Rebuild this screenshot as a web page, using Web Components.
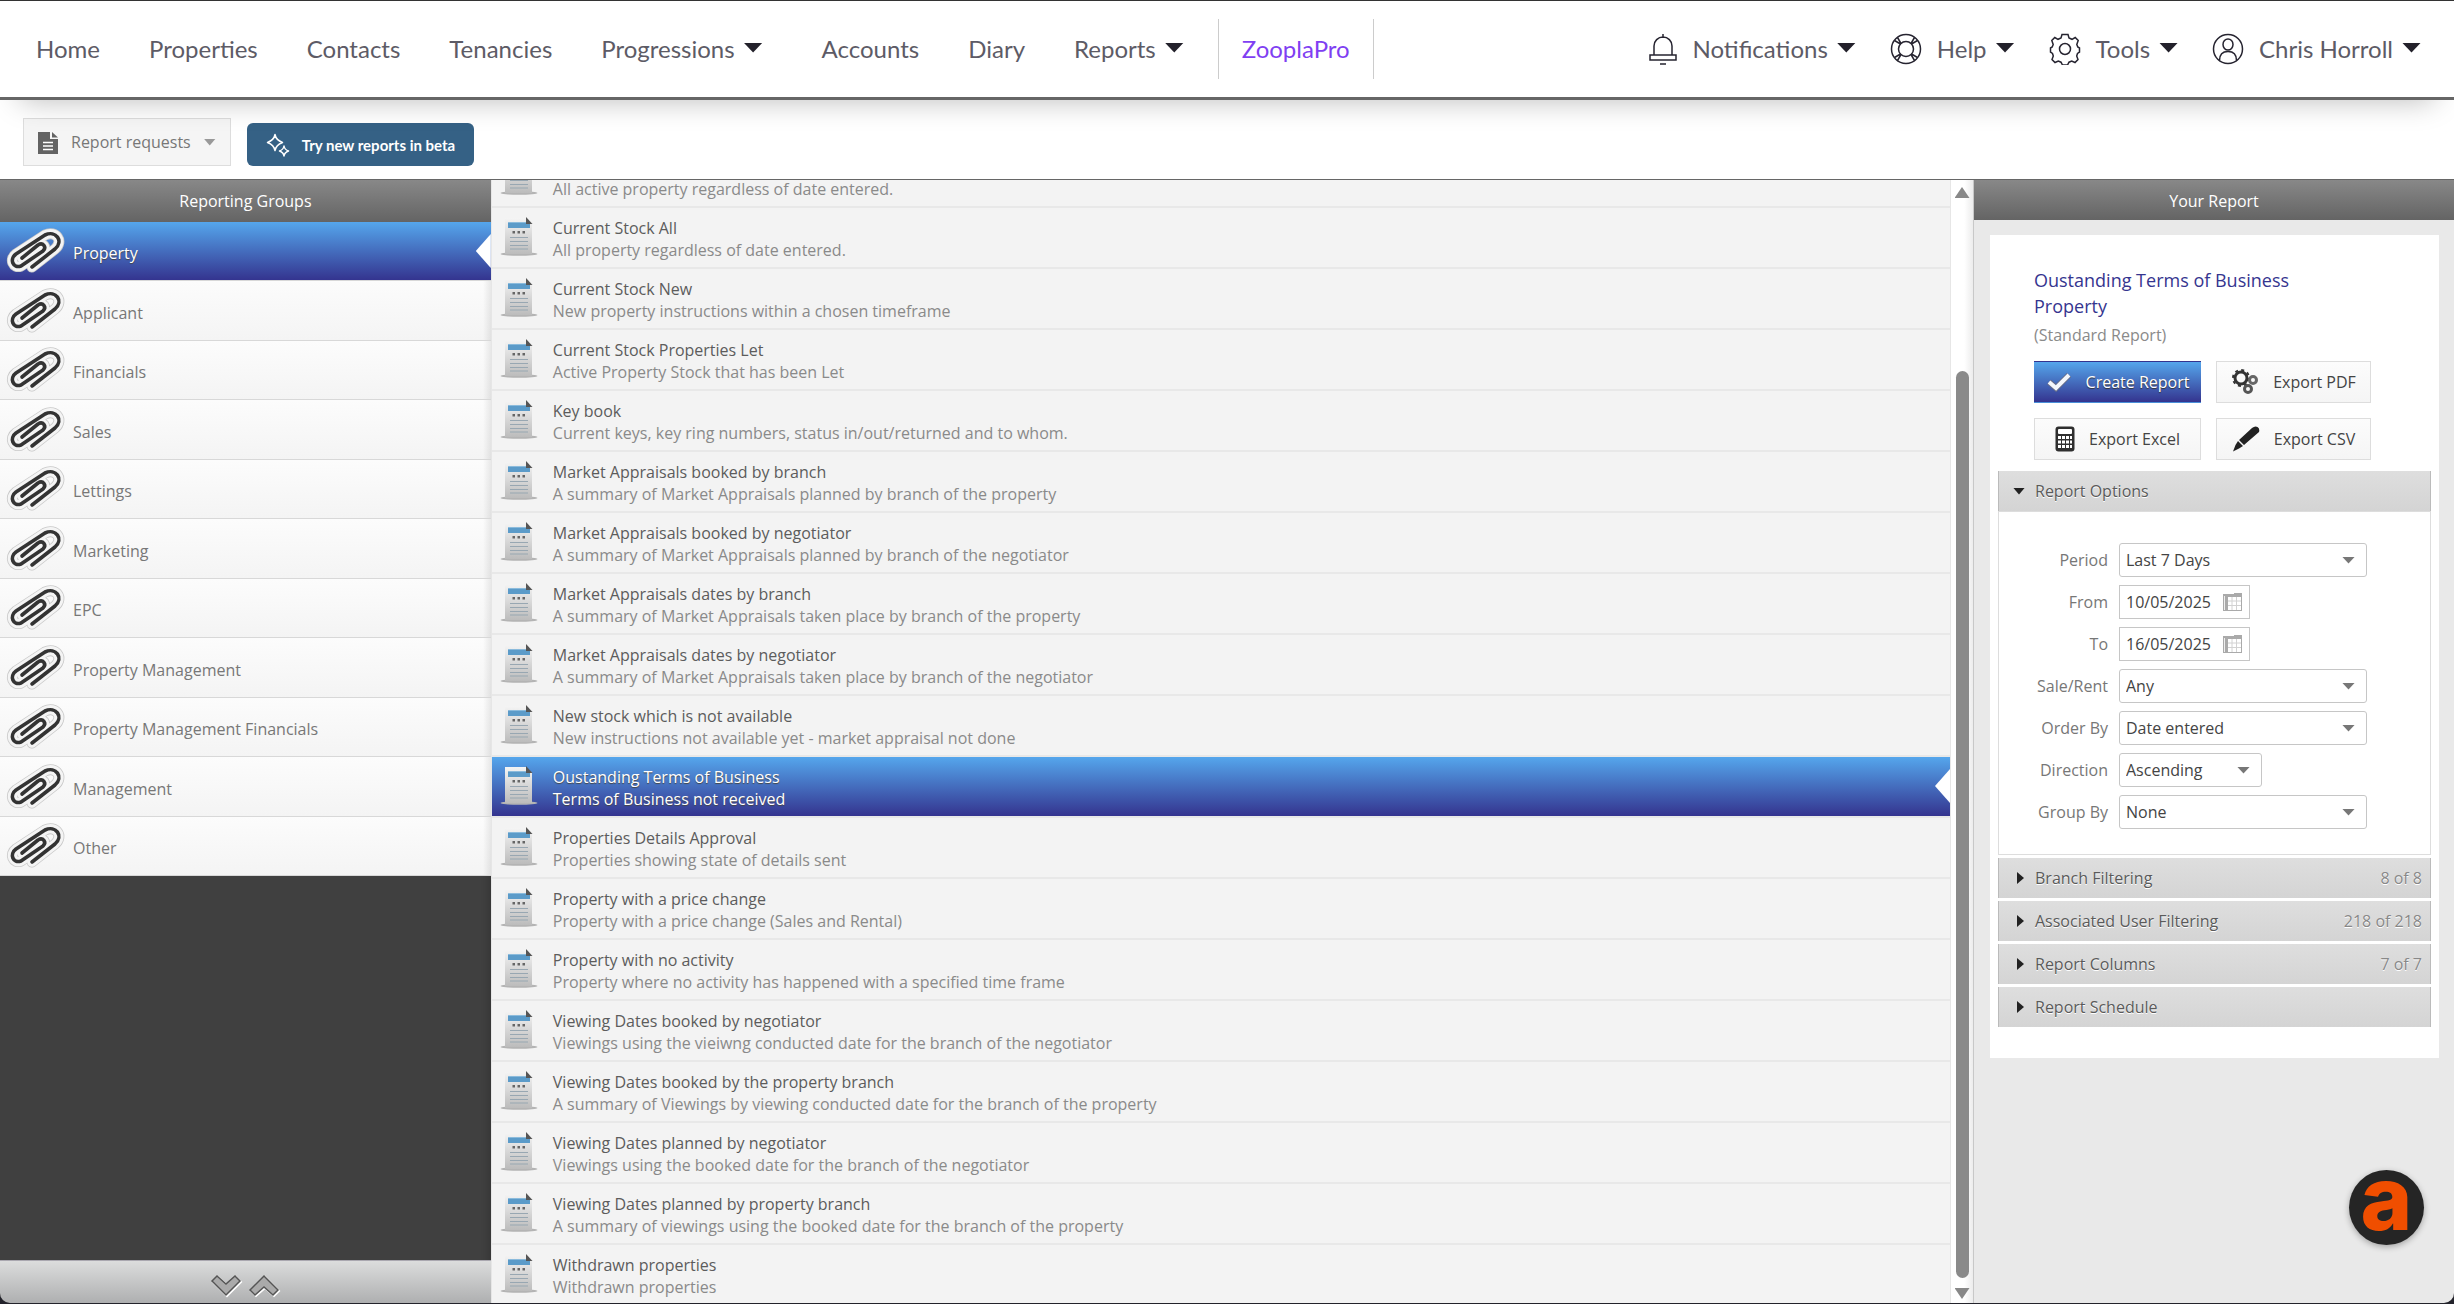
<!DOCTYPE html>
<html lang="en">
<head>
<meta charset="utf-8">
<title>Reports</title>
<style>
    html, body {
        margin: 0;
        height: 100%;
    }

    body {
        background: #23232b;
        overflow: hidden;
        font: 16px/22px "Open Sans", "Noto Sans", sans-serif;
        color: #777;
    }
</style>
</head>
<body>
<report-app></report-app>

<script>
    const define = (name, html, setup) => {
        customElements.define(name, class extends HTMLElement {
            constructor() {
                super();
                this.attachShadow({mode: 'open'});
            }

            connectedCallback() {
                this.shadowRoot.innerHTML = typeof html === 'function' ? html(this) : html;
                if (setup) setup(this, this.shadowRoot);
            }
        });
    };

    const icons = {
        bell: `<svg width="30" height="32" viewBox="0 0 30 32"><path d="M15 1v4M6 22V13a9 9 0 0 1 18 0v9M2 22h26v5H2zM12 31h6"/></svg>`,
        help: `<svg width="32" height="32" viewBox="0 0 32 32"><circle cx="16" cy="16" r="14.5"/><circle cx="16" cy="16" r="7.5"/><path d="M4.500 7.500l6 3.500M7.500 4.500l3.500 6M27.500 7.500l-6 3.500M24.500 4.500l-3.500 6M4.500 24.500l6-3.500M7.500 27.500l3.500-6M27.500 24.500l-6-3.500M24.500 27.500l-3.500-6"/></svg>`,
        gear: `<svg width="32" height="32" viewBox="0 0 32 32"><circle cx="16" cy="16" r="5.500"/><path d="M13 1.500h6l1 3.500 3 1.300 3.200-1.800 3 3-1.400 4 1 2.500 1.700 1v4l-2 1.500-.8 2.500 1.300 3.500-3 3-3.300-1.500-2.700 1.200-1.500 2.800h-5l-1.500-2.800-2.700-1.200L6 29.500l-3-3 1.300-3.500-.8-2.500-2-1.500v-4l1.700-1 1-2.500-1.400-4 3-3L9 6.300 12 5z"/></svg>`,
        user: `<svg width="32" height="32" viewBox="0 0 32 32"><circle cx="16" cy="16" r="14.500"/><ellipse cx="16" cy="11.500" rx="5" ry="5.500"/><path d="M7.500 27.500c0-5.500 3-9 8.500-9s8.500 3.500 8.500 9"/></svg>`,
        // Report row: a page with a folded corner, standing on its shadow
        page: `<svg width="38" height="40" viewBox="0 0 38 40">
            <defs><linearGradient id="p" x2="0" y2="1"><stop stop-color="#f4f4f4"/><stop offset="1" stop-color="#bcbcbc"/></linearGradient></defs>
            <ellipse cx="19" cy="37" rx="18.500" ry="1.800" fill="#b4b4b4"/>
            <path d="M5 1h21l6 6v30H5z" fill="url(#p)"/>
            <path d="M26 0l6.500 7H26z" fill="#555"/>
            <path d="M8 5h18v2h4v4H8z" fill="#5b9bc9"/><path d="M8 5h18v1H8z" fill="#8bbbdc"/>
            <path d="M12.500 14h2.500v2.500h-2.500zM17.500 14h2.500v2.500h-2.500zM22.500 14h2.500v2.500h-2.500z" fill="#666"/>
            <path d="M10 20.500h18M10 24.500h18M10 28.500h18M10 32h18" stroke="#98a7b2" stroke-width="1.200"/></svg>`,
        clip: `<svg width="58" height="44" viewBox="0 0 58 44" fill="none" stroke-linecap="round" stroke-linejoin="round">
            ${[['#c8c8c8', 11], ['#f4f4f4', 9.4], ['#333', 3.6]].map(([c, w]) =>
                `<path stroke="${c}" stroke-width="${w}" d="M25 38 48 20C57 12 49 1 38 6L9 25C2 30 6 40 14 37L36 22C40 18 36 13 31 16L15 29"/>`).join('')}</svg>`,
        check: `<svg width="26" height="20" viewBox="0 0 26 20"><path d="M3 10l7 6L23 3" fill="none" stroke="#666c88" stroke-width="6"/><path d="M3 10l7 6L23 3" fill="none" stroke="#f3f6fc" stroke-width="4"/></svg>`,
        cogs: `<svg width="28" height="26" viewBox="0 0 28 26" fill="none" stroke="#333"><circle cx="10" cy="9" r="6" stroke-width="3"/><circle cx="10" cy="9" r="8" stroke-width="2" stroke-dasharray="3 3.280"/><circle cx="22" cy="11" r="3.500" stroke="#666" stroke-width="3"/><circle cx="17" cy="20" r="3.500" stroke="#555" stroke-width="3"/></svg>`,
        calc: `<svg width="20" height="26" viewBox="0 0 20 26"><rect x="0.500" y="0.500" width="19" height="25" rx="3" fill="#2f2f2f"/><rect x="3" y="3" width="14" height="5" rx="1" fill="#fff"/><path d="M3 10h3v3H3zM7 10h3v3H7zM11 10h3v3h-3zM15 10h2v3h-2zM3 14.500h3v3H3zM7 14.500h3v3H7zM11 14.500h3v3h-3zM15 14.500h2v3h-2zM3 19h3v3H3zM7 19h3v3H7zM11 19h3v3h-3zM15 19h2v3h-2z" fill="#fff"/></svg>`,
        pen: `<svg width="28" height="26" viewBox="0 0 28 26" fill="#222"><path d="M20 2q3-2.500 5.500-1T27 6L12 19l-5-5zM6 15l5 5-4 2.500-6 3L3.500 19z"/></svg>`,
        file: `<svg width="20" height="23" viewBox="0 0 20 23"><path d="M0 1h12v7h8v15H0z" fill="#636363"/><path d="M14 1l6 5.500h-6z" fill="#636363"/><path d="M5 11.500h10M5 15h10M5 18.500h10" stroke="#fff" stroke-width="1.500"/></svg>`,
        stars: `<svg width="24" height="24" viewBox="0 0 24 24" fill="none" stroke="#fff" stroke-width="1.500" stroke-linejoin="round"><path d="M9 1.500Q10 7 16.500 9.500 10 12 9 17.500 8 12 1.500 9.500 8 7 9 1.500zM18 13q.5 3.500 4.500 5-4 1.500-4.500 5-.5-3.500-4.500-5 4-1.500 4.500-5z"/></svg>`,
        calendar: `<svg width="19" height="18" viewBox="0 0 19 18"><path d="M0 1h11V0h8v18H0z" fill="#aaa"/><path d="M5 4h13v13H5z" fill="#fff"/><path d="M1 3h1v14H1z" fill="#eee"/><path d="M9 4v13M13.500 4v13M5 8h13M5 12.500h13" stroke="#d2d2d2"/></svg>`,
        down: `<svg width="32" height="24" viewBox="0 0 32 24"><path d="M2 7l5-5 9 8 9-8 5 5-14 14z" fill="none" stroke="#fff" stroke-width="2" transform="translate(1 1)"/><path d="M2 7l5-5 9 8 9-8 5 5-14 14z" fill="#aaa" stroke="#555" stroke-width="1.500"/></svg>`,
        up: `<svg width="32" height="24" viewBox="0 0 32 24"><path d="M2 16L16 2l14 14-5 5-9-8-9 8z" fill="none" stroke="#fff" stroke-width="2" transform="translate(1 1)"/><path d="M2 16L16 2l14 14-5 5-9-8-9 8z" fill="#aaa" stroke="#555" stroke-width="1.500"/></svg>`
    };

    define('nav-link', el => `
<style>
    :host { display: block; }
    a {
        display: flex;
        align-items: center;
        color: inherit;
        text-decoration: none;
        white-space: nowrap;
    }
    svg {
        flex: none;
        margin-right: 15px;
        fill: none;
        stroke: #262430;
        stroke-width: 1.5;
    }
    i {
        width: 19px;
        height: 10px;
        margin: 0 0 3px 9px;
        background: #23212b;
        clip-path: polygon(0 0, 100% 0, 50% 100%);
    }
</style>
<a href="#">${icons[el.getAttribute('icon')] || ''}<slot></slot>${el.hasAttribute('menu') ? '<i></i>' : ''}</a>`);

    define('main-nav', `
<style>
    :host {
        display: flex;
        justify-content: space-between;
        align-items: center;
        box-sizing: border-box;
        height: 100px;
        padding: 0 33px 0 36px;
        position: relative;
        z-index: 1;
        background: #fff;
        border-top: 1px solid #333;
        border-bottom: 3px solid #666;
        box-shadow: 0 20px 30px -20px rgba(0, 0, 0, .28);
        font: 24px/30px Lato, sans-serif;
        color: #5d5b66;
    }
    nav { display: flex; align-items: center; }
    .left { gap: 49px; }
    .left [menu] { margin-right: 10px; }
    .right { gap: 34px; }
    .pro {
        padding: 15px 23px;
        margin-left: -25px;
        border: solid #ccc;
        border-width: 0 1px;
        color: #7f3ff2;
    }
</style>
<nav class="left">
    <nav-link>Home</nav-link>
    <nav-link>Properties</nav-link>
    <nav-link>Contacts</nav-link>
    <nav-link>Tenancies</nav-link>
    <nav-link menu>Progressions</nav-link>
    <nav-link>Accounts</nav-link>
    <nav-link>Diary</nav-link>
    <nav-link menu>Reports</nav-link>
    <nav-link class="pro">ZooplaPro</nav-link>
</nav>
<nav class="right">
    <nav-link icon="bell" menu>Notifications</nav-link>
    <nav-link icon="help" menu>Help</nav-link>
    <nav-link icon="gear" menu>Tools</nav-link>
    <nav-link icon="user" menu>Chris Horroll</nav-link>
</nav>`);

    define('tool-bar', `
<style>
    :host {
        display: flex;
        align-items: flex-end;
        gap: 16px;
        box-sizing: border-box;
        height: 80px;
        padding: 0 23px 13px;
        background: #fff;
        border-bottom: 1px solid #666;
    }
    button {
        display: flex;
        align-items: center;
        font: inherit;
        color: #777;
    }
    .requests {
        height: 48px;
        padding: 0 14px;
        gap: 13px;
        background: #f5f5f5;
        border: 1px solid #ddd;
    }
    .requests i {
        width: 12px;
        height: 7px;
        background: #999;
        clip-path: polygon(0 0, 100% 0, 50% 100%);
    }
    .beta {
        height: 43px;
        padding: 0 19px;
        gap: 12px;
        border: 0;
        border-radius: 6px;
        background: #356185;
        color: #fff;
        font: bold 15px/22px Lato, sans-serif;
    }
</style>
<button class="requests">${icons.file}<span>Report requests</span><i></i></button>
<button class="beta">${icons.stars}Try new reports in beta</button>`);

    define('panel-title', `
<style>
    :host {
        display: block;
        flex: none;
        padding: 10px 0 8px;
        text-align: center;
        color: #fff;
        background: linear-gradient(#888, #646464);
    }
</style>
<slot></slot>`);

    const groups = ['Property', 'Applicant', 'Financials', 'Sales', 'Lettings', 'Marketing', 'EPC',
        'Property Management', 'Property Management Financials', 'Management', 'Other'];

    define('group-list', `
<style>
    :host {
        display: flex;
        flex-direction: column;
        background: #404040;
        box-shadow: inset -8px 0 8px -6px rgba(0, 0, 0, .2);
    }
    panel-title { padding: 10px 0; }
    ul { margin: 0; padding: 0; list-style: none; }
    li {
        box-sizing: border-box;
        height: 59px;
        border-bottom: 1px solid #d8d8d8;
        background: linear-gradient(90deg, transparent calc(100% - 8px), rgba(0, 0, 0, .08)), linear-gradient(#fcfcfc, #f4f4f4);
    }
    li:nth-child(even) { height: 60px; }
    a {
        display: flex;
        align-items: center;
        height: 100%;
        padding-left: 7px;
        gap: 8px;
        color: inherit;
        text-decoration: none;
    }
    a::after {
        content: "";
        width: 15px;
        height: 34px;
        margin-left: auto;
    }
    .on {
        color: #fff;
        background: linear-gradient(#55a6ec, #34348f);
        text-shadow: 0 1px 1px #444;
    }
    .on a::after { background: #fff; clip-path: polygon(100% 0, 100% 100%, 0 50%); }
    span { padding-top: 4px; }
    svg { overflow: visible; }
    footer {
        display: flex;
        align-items: center;
        justify-content: center;
        gap: 6px;
        height: 42px;
        margin-top: auto;
        border-top: 1px solid #aaa8b0;
        background: linear-gradient(#dcdddd, #aeafb0);
    }
    footer button { padding: 8px 0 0; border: 0; background: none; display: flex; }
</style>
<panel-title>Reporting Groups</panel-title>
<ul>${groups.map((g, i) => `<li${i ? '' : ' class="on"'}><a href="#">${icons.clip}<span>${g}</span></a></li>`).join('')}</ul>
<footer><button aria-label="Down">${icons.down}</button><button aria-label="Up">${icons.up}</button></footer>`);

    const reports = [
        ['&nbsp;', 'All active property regardless of date entered.'],
        ['Current Stock All', 'All property regardless of date entered.'],
        ['Current Stock New', 'New property instructions within a chosen timeframe'],
        ['Current Stock Properties Let', 'Active Property Stock that has been Let'],
        ['Key book', 'Current keys, key ring numbers, status in/out/returned and to whom.'],
        ['Market Appraisals booked by branch', 'A summary of Market Appraisals planned by branch of the property'],
        ['Market Appraisals booked by negotiator', 'A summary of Market Appraisals planned by branch of the negotiator'],
        ['Market Appraisals dates by branch', 'A summary of Market Appraisals taken place by branch of the property'],
        ['Market Appraisals dates by negotiator', 'A summary of Market Appraisals taken place by branch of the negotiator'],
        ['New stock which is not available', 'New instructions not available yet - market appraisal not done'],
        ['Oustanding Terms of Business', 'Terms of Business not received'],
        ['Properties Details Approval', 'Properties showing state of details sent'],
        ['Property with a price change', 'Property with a price change (Sales and Rental)'],
        ['Property with no activity', 'Property where no activity has happened with a specified time frame'],
        ['Viewing Dates booked by negotiator', 'Viewings using the vieiwng conducted date for the branch of the negotiator'],
        ['Viewing Dates booked by the property branch', 'A summary of Viewings by viewing conducted date for the branch of the property'],
        ['Viewing Dates planned by negotiator', 'Viewings using the booked date for the branch of the negotiator'],
        ['Viewing Dates planned by property branch', 'A summary of viewings using the booked date for the branch of the property'],
        ['Withdrawn properties', 'Withdrawn properties']
    ];

    define('report-list', `
<style>
    :host { display: flex; min-height: 0; background: #f3f3f3; }
    ul {
        flex: 1;
        margin: 0;
        padding: 0;
        list-style: none;
        overflow: hidden;
        border: solid #e6e6e6;
        border-width: 0 1px;
    }
    li { height: 59px; border-bottom: 2px solid #e8e8e8; }
    a {
        display: grid;
        grid-template-columns: 38px 1fr 15px;
        grid-template-rows: 22px 22px;
        column-gap: 15px;
        height: 50px;
        padding: 9px 0 0 8px;
        color: #8a8a8a;
        text-decoration: none;
    }
    svg { grid-row: 1 / 3; }
    b { grid-column: 2; font-weight: normal; color: #5c5c5c; }
    span { grid-column: 2; }
    a::after {
        content: "";
        grid-column: 3;
        grid-row: 1 / 3;
        height: 34px;
        margin-top: 3px;
    }
    .on { background: linear-gradient(#55a6ec, #34348f); text-shadow: 0 1px 1px #444; }
    .on b, .on span { color: #fff; }
    .on a::after { background: #fff; clip-path: polygon(100% 0, 100% 100%, 0 50%); }
    .bar {
        display: flex;
        flex-direction: column;
        align-items: center;
        box-sizing: border-box;
        width: 23px;
        padding: 7px 0 4px;
        border-right: 1px solid #c8c8c8;
        background: linear-gradient(90deg, #fff 60%, #ececec);
    }
    .bar i { width: 15px; height: 11px; background: #888; clip-path: polygon(0 100%, 100% 100%, 50% 0); }
    .bar i:last-child { clip-path: polygon(0 0, 100% 0, 50% 100%); }
    .track { flex: 1; display: flex; padding: 0 0 10px; }
    .thumb { width: 13px; height: 84%; align-self: flex-end; border-radius: 7px; background: #8a8a8a; }
</style>
<ul>${reports.map(([t, d]) => `<li${t.startsWith('Oust') ? ' class="on"' : ''}><a href="#">${icons.page}<b>${t}</b><span>${d}</span></a></li>`).join('')}</ul>
<div class="bar"><i></i><div class="track"><div class="thumb"></div></div><i></i></div>`,
    (el, root) => {
        root.querySelector('ul').scrollTop = 33;
    });

    define('icon-button', el => `
<style>
    :host { display: block; }
    button {
        display: flex;
        align-items: center;
        justify-content: center;
        gap: 14px;
        width: 100%;
        height: 42px;
        padding: 0;
        border: 1px solid #ddd;
        background: linear-gradient(#fcfcfc, #f5f5f5);
        font: inherit;
        color: #444;
        white-space: nowrap;
    }
    :host([primary]) button {
        border-color: #34348f transparent #4a90d9;
        border-width: 1px 0;
        background: linear-gradient(#55a6ec, #34348f);
        color: #fff;
        text-shadow: 0 1px 1px #333;
    }
</style>
<button>${icons[el.getAttribute('icon')]}<slot></slot></button>`);

    define('report-field', el => {
        const size = el.getAttribute('size') || 'wide';
        const value = el.getAttribute('value');
        const control = size === 'date'
            ? `<input id="f" type="text" value="${value}">${icons.calendar}`
            : `<select id="f"><option>${value}</option></select><i></i>`;
        return `
<style>
    :host {
        display: grid;
        grid-template-columns: 109px 1fr;
        column-gap: 11px;
        align-items: center;
    }
    label { text-align: right; color: #777; }
    div { display: grid; align-items: center; width: 248px; }
    .date { width: 131px; }
    .short { width: 143px; }
    input, select, i, svg { grid-area: 1 / 1; }
    input, select {
        appearance: none;
        box-sizing: border-box;
        width: 100%;
        height: 34px;
        margin: 0;
        padding: 0 6px;
        border: 1px solid #c6c6c6;
        border-radius: 3px;
        background: #fff;
        font: inherit;
        color: #444;
    }
    input { border-radius: 0; }
    i, svg { justify-self: end; margin-right: 12px; pointer-events: none; }
    svg { margin-right: 8px; }
    i {
        width: 13px;
        height: 7px;
        background: #777;
        clip-path: polygon(0 0, 100% 0, 50% 100%);
    }
</style>
<label for="f">${el.getAttribute('label')}</label>
<div class="${size}">${control}</div>`;
    });

    define('report-section', el => `
<style>
    :host { display: block; }
    button {
        display: flex;
        align-items: center;
        width: 100%;
        height: 40px;
        padding: 0 8px 0 18px;
        border: solid #bbb;
        border-width: 0 1px;
        background: linear-gradient(#dedede, #d4d4d4);
        font: inherit;
        color: #5a5a5a;
        text-shadow: 0 1px 0 #fff;
    }
    i { width: 7px; height: 12px; margin-right: 11px; background: #222; clip-path: polygon(0 0, 100% 50%, 0 100%); }
    :host([open]) i { width: 12px; height: 7px; margin: 0 10px 0 -4px; clip-path: polygon(0 0, 100% 0, 50% 100%); }
    em { margin-left: auto; font-style: normal; color: #888; }
    .body {
        display: grid;
        gap: 8px;
        padding: 31px 0 25px;
        border: 1px solid #ddd;
    }
</style>
<button aria-expanded="${el.hasAttribute('open')}"><i></i>${el.getAttribute('title-text')}<em>${el.getAttribute('count') || ''}</em></button>
${el.hasAttribute('open') ? '<div class="body"><slot></slot></div>' : ''}`);

    define('your-report', `
<style>
    :host { display: block; background: #e9e9e9; }
    section {
        margin: 15px 15px 0 16px;
        padding: 32px 8px 31px;
        background: #fff;
    }
    header { padding: 0 36px 11px; }
    h2 { margin: 0; font: 18px/26px "Open Sans", "Noto Sans", sans-serif; color: #35358f; }
    p { margin: 5px 0 15px; color: #8a8a8a; }
    .buttons {
        display: grid;
        grid-template-columns: 167px 155px;
        gap: 15px;
    }
    .sections { display: grid; gap: 3px; }
</style>
<panel-title>Your Report</panel-title>
<section>
    <header>
        <h2>Oustanding Terms of Business<br>Property</h2>
        <p>(Standard Report)</p>
        <div class="buttons">
            <icon-button primary icon="check">Create Report</icon-button>
            <icon-button icon="cogs">Export PDF</icon-button>
            <icon-button icon="calc">Export Excel</icon-button>
            <icon-button icon="pen">Export CSV</icon-button>
        </div>
    </header>
    <div class="sections">
        <report-section open title-text="Report Options">
            <report-field label="Period" value="Last 7 Days"></report-field>
            <report-field label="From" value="10/05/2025" size="date"></report-field>
            <report-field label="To" value="16/05/2025" size="date"></report-field>
            <report-field label="Sale/Rent" value="Any"></report-field>
            <report-field label="Order By" value="Date entered"></report-field>
            <report-field label="Direction" value="Ascending" size="short"></report-field>
            <report-field label="Group By" value="None"></report-field>
        </report-section>
        <report-section title-text="Branch Filtering" count="8 of 8"></report-section>
        <report-section title-text="Associated User Filtering" count="218 of 218"></report-section>
        <report-section title-text="Report Columns" count="7 of 7"></report-section>
        <report-section title-text="Report Schedule"></report-section>
    </div>
</section>`);

    define('chat-badge', `
<style>
    :host {
        position: fixed;
        right: 30px;
        bottom: 59px;
    }
    button {
        display: flex;
        justify-content: center;
        align-items: center;
        width: 75px;
        height: 75px;
        padding: 0 0 18px;
        border: 0;
        border-radius: 50%;
        background: #252525;
        box-shadow: 0 2px 6px rgba(0, 0, 0, .3);
        font: 800 88px/75px Inter, sans-serif;
        color: #f04e00;
    }
</style>
<button>a</button>`);

    define('report-app', `
<style>
    :host {
        display: flex;
        flex-direction: column;
        height: calc(100vh - 1px);
        overflow: hidden;
        border-radius: 0 0 10px 10px;
    }
    main-nav, tool-bar { flex: none; }
    main {
        flex: 1;
        display: grid;
        grid-template: minmax(0, 1fr) / 20% 1fr 480px;
        min-height: 0;
    }
</style>
<main-nav></main-nav>
<tool-bar></tool-bar>
<main>
    <group-list></group-list>
    <report-list></report-list>
    <your-report></your-report>
</main>
<chat-badge></chat-badge>`);
</script>
</body>
</html>
